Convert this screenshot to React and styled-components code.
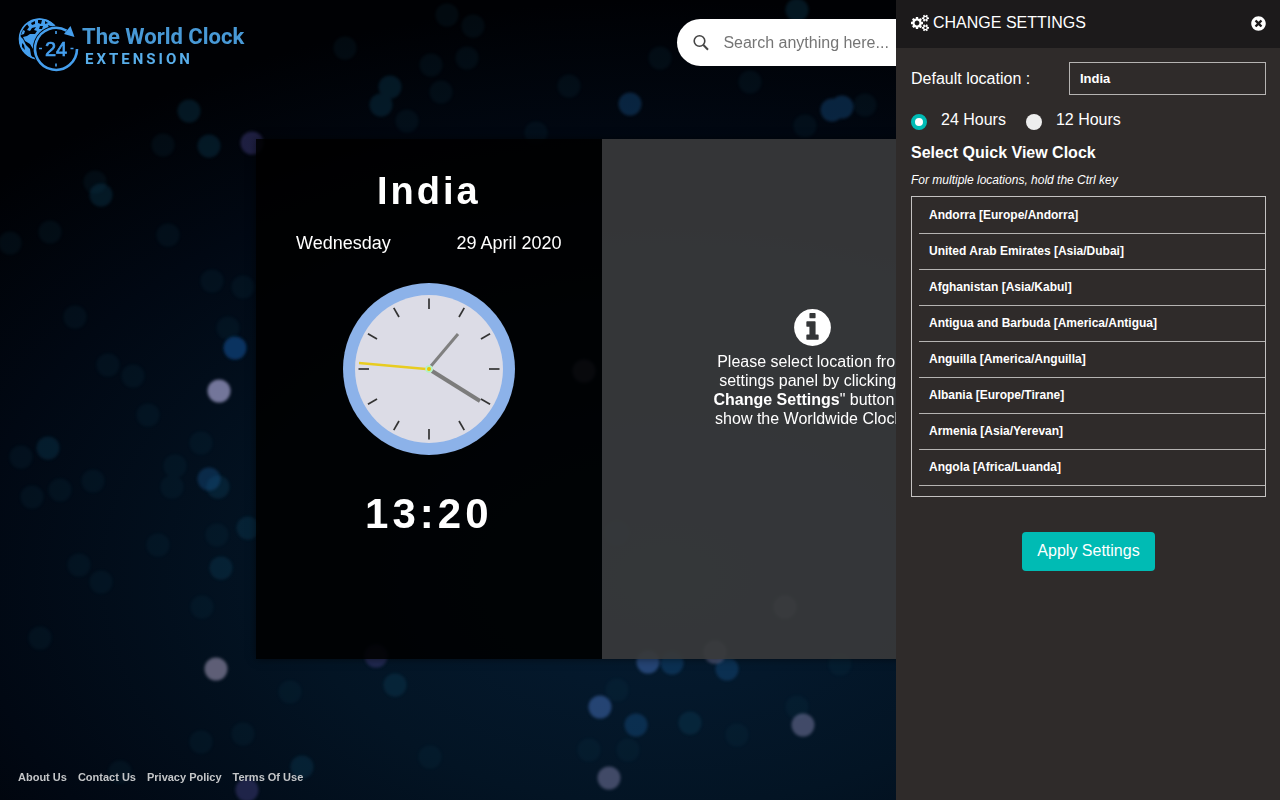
import { useState } from "react";
import styled, { createGlobalStyle } from "styled-components";
import { FaTimesCircle } from "react-icons/fa";

const GlobalStyle = createGlobalStyle`
  *, *::before, *::after {
    box-sizing: border-box;
  }
  body {
    margin: 0;
    background: #01050c;
    color: #fff;
    font-family: "Liberation Sans", Arial, sans-serif;
    font-size: 16px;
  }
  button, input, select {
    font-family: inherit;
  }
`;

const Page = styled.div`
  min-height: 100vh;
  display: flex;
  flex-direction: column;
  overflow: hidden;
`;

const Backdrop = styled.svg`
  position: fixed;
  inset: 0;
  width: 100%;
  height: 100%;
  z-index: -1;
`;

const Header = styled.header`
  display: flex;
  justify-content: space-between;
  align-items: flex-start;
  padding: 16px 17px 0;
`;

const Logo = styled.a`
  display: flex;
  gap: 3px;
  color: #4aa0e6;
  text-decoration: none;
`;

const LogoText = styled.span`
  display: flex;
  flex-direction: column;
  padding-top: 8px;
  font-family: "Liberation Sans Narrow", "Roboto", sans-serif;
  font-weight: bold;
`;

const LogoName = styled.span`
  font-size: 22px;
  line-height: 26px;
  color: #4899d6;
`;

const LogoSub = styled.span`
  padding-left: 3px;
  font-size: 15px;
  line-height: 18px;
  letter-spacing: 3px;
  color: #58aeea;
`;

const Search = styled.label`
  display: flex;
  align-items: center;
  gap: 14px;
  width: 47%;
  height: 47px;
  margin-top: 3px;
  padding: 0 16px;
  border-radius: 24px;
  background: #fff;

  svg {
    flex-shrink: 0;
  }
`;

const SearchInput = styled.input`
  flex: 1;
  padding: 0;
  border: 0;
  outline: 0;
  background: transparent;
  font-size: 16px;
  color: #333;
  &::placeholder {
    color: #757575;
  }
`;

const Main = styled.main`
  flex: 1;
  display: flex;
  align-items: flex-start;
  width: 60%;
  margin: 0 auto;
  padding: 66px 0 40px;
`;

const Cards = styled.div`
  flex: 1;
  display: flex;
  box-shadow: 0 0 8px rgba(0, 0, 0, 0.5);
`;

const ClockCard = styled.section`
  width: 45%;
  display: flex;
  flex-direction: column;
  align-items: center;
  padding: 32px 40px 121px;
  background: rgba(0, 0, 0, 0.88);
`;

const Country = styled.h1`
  margin: 0;
  font-size: 38px;
  line-height: 40px;
  letter-spacing: 3px;
`;

const DateRow = styled.div`
  display: flex;
  justify-content: space-between;
  width: 100%;
  margin: 22px 0 30px;
  font-size: 18px;
  line-height: 20px;
`;

const DigitalTime = styled.time`
  margin-top: 35px;
  font-size: 42px;
  line-height: 48px;
  font-weight: bold;
  letter-spacing: 4px;
`;

const InfoCard = styled.section`
  width: 55%;
  display: flex;
  flex-direction: column;
  align-items: center;
  padding-top: 167px;
  background: rgba(56, 57, 58, 0.93);
`;

const InfoText = styled.p`
  max-width: 204px;
  margin: 3px 0 0;
  line-height: 19px;
  text-align: center;
`;

const Footer = styled.footer`
  display: flex;
  gap: 11px;
  padding: 16px 18px;
`;

const FooterLink = styled.a`
  color: #c4c6c8;
  font-size: 11px;
  font-weight: bold;
  line-height: 14px;
  text-decoration: none;
`;

const Drawer = styled.aside`
  position: fixed;
  top: 0;
  right: 0;
  bottom: 0;
  width: 30%;
  background: #2f2b2a;
  overflow-y: auto;
`;

const DrawerHeader = styled.div`
  display: flex;
  align-items: center;
  gap: 4px;
  padding: 13px 14px 15px 15px;
  background: #1c1a1b;
`;

const DrawerTitle = styled.h2`
  flex: 1;
  margin: 0;
  font-size: 16px;
  font-weight: normal;
  line-height: 20px;
`;

const CloseButton = styled.button`
  display: flex;
  padding: 0;
  border: 0;
  background: transparent;
  color: #fff;
  cursor: pointer;
`;

const SettingsForm = styled.form`
  padding: 14px 14px 0 15px;
`;

const LocationRow = styled.div`
  display: flex;
  align-items: center;
  justify-content: space-between;
`;

const LocationSelect = styled.select`
  appearance: none;
  width: 197px;
  height: 33px;
  padding: 0 10px;
  border: 1px solid #b5b3b2;
  border-radius: 0;
  outline: 0;
  background: #2f2b2a;
  color: #fff;
  font-size: 13px;
  font-weight: bold;
`;

const RadioRow = styled.div`
  display: flex;
  gap: 20px;
  margin-top: 15px;
`;

const RadioLabel = styled.label`
  display: flex;
  align-items: center;
  gap: 14px;
  line-height: 20px;
`;

const Radio = styled.input`
  appearance: none;
  width: 16px;
  height: 16px;
  margin: 3px 0 0;
  border-radius: 50%;
  background: #eee;
  &:checked {
    border: 4px solid #00bbb4;
    background: #fff;
  }
`;

const ListLabel = styled.label`
  display: block;
  margin-top: 13px;
  font-weight: bold;
  line-height: 20px;
`;

const Hint = styled.p`
  margin: 9px 0 8px;
  font-size: 12px;
  line-height: 16px;
  font-style: italic;
`;

const ClockList = styled.select`
  display: block;
  width: 100%;
  height: 301px;
  padding: 1px 0 0 7px;
  border: 1px solid #c4c2c1;
  border-radius: 0;
  outline: 0;
  background: #2f2b2a;
  color: #fff;
  font-size: 12px;
  scrollbar-width: none;
`;

const ClockOption = styled.option`
  min-height: 36px;
  padding: 10px 10px 11px;
  border-bottom: 1px solid #b5b3b2;
  font-weight: bold;
  line-height: 14px;
`;

const ApplyButton = styled.button`
  display: block;
  margin: 35px auto 0;
  padding: 0 15px 2px;
  height: 39px;
  border: 0;
  border-radius: 4px;
  background: #00bbb4;
  color: #fff;
  font-size: 16px;
  cursor: pointer;
`;

const locations = [
  "Andorra [Europe/Andorra]",
  "United Arab Emirates [Asia/Dubai]",
  "Afghanistan [Asia/Kabul]",
  "Antigua and Barbuda [America/Antigua]",
  "Anguilla [America/Anguilla]",
  "Albania [Europe/Tirane]",
  "Armenia [Asia/Yerevan]",
  "Angola [Africa/Luanda]",
  "Antarctica [Antarctica/Casey]",
];

// [x, y] of the light spots, grouped by brightness
const spots = [
  {
    fill: "#0d3a50",
    opacity: 0.17,
    points: [
      [345, 48], [431, 65], [467, 58], [441, 92], [447, 15], [473, 26], [569, 86],
      [407, 121], [536, 133], [163, 145], [95, 182], [168, 235], [50, 232], [10, 243],
      [75, 317], [108, 365], [133, 376], [212, 281], [228, 328], [243, 287], [148, 415],
      [21, 457], [60, 490], [32, 497], [93, 481], [175, 466], [172, 487], [201, 443],
      [217, 535], [158, 545], [79, 565], [101, 582], [202, 607], [40, 638], [201, 742],
      [243, 734], [290, 692], [120, 772], [430, 757], [589, 750], [628, 750], [737, 735],
      [797, 707], [617, 690], [660, 58], [750, 82], [840, 664], [865, 105], [805, 126],
    ],
  },
  {
    fill: "#0f4460",
    opacity: 0.32,
    points: [
      [189, 111], [209, 146], [390, 87], [101, 195], [48, 448], [221, 568], [302, 767],
      [690, 723], [797, 10], [248, 528], [218, 487], [395, 685], [381, 105], [617, 533],
    ],
  },
  {
    fill: "#14528a",
    opacity: 0.4,
    points: [
      [209, 479], [630, 104], [832, 110], [842, 107], [636, 725], [672, 663], [727, 669],
    ],
  },
  { fill: "#0f3f78", opacity: 0.75, points: [[235, 348]] },
  { fill: "#3a62a4", opacity: 0.6, points: [[600, 707], [648, 662]] },
  { fill: "#3d3a78", opacity: 0.5, points: [[252, 143], [376, 656], [247, 790]] },
  { fill: "#7f7fa8", opacity: 0.5, points: [[803, 725], [609, 778], [715, 652], [785, 607], [584, 371]] },
  { fill: "#9090ba", opacity: 0.8, points: [[219, 391]] },
  { fill: "#75728c", opacity: 0.8, points: [[216, 669]] },
];

const NightSky = () => (
  <Backdrop viewBox="0 0 1280 800" preserveAspectRatio="xMidYMid slice" aria-hidden="true">
    <defs>
      <radialGradient id="sky" cx="0.52" cy="0.72" r="0.72">
        <stop offset="0" stopColor="#051c32" />
        <stop offset="0.4" stopColor="#031424" />
        <stop offset="0.75" stopColor="#010813" />
        <stop offset="1" stopColor="#000104" />
      </radialGradient>
      <filter id="soft" x="-50%" y="-50%" width="200%" height="200%">
        <feGaussianBlur stdDeviation="1.8" />
      </filter>
    </defs>
    <rect width="1280" height="800" fill="url(#sky)" />
    {spots.map((group) => (
      <g key={group.fill} fill={group.fill} opacity={group.opacity} filter="url(#soft)">
        {group.points.map(([x, y]) => (
          <circle key={`${x}-${y}`} cx={x} cy={y} r="11.5" />
        ))}
      </g>
    ))}
  </Backdrop>
);

const GlobeClock = () => (
  <svg width="62" height="57" viewBox="0 0 62 57" aria-hidden="true">
    <defs>
      <mask id="behind">
        <rect width="62" height="57" fill="#fff" />
        <circle cx="39" cy="33" r="23.2" fill="#000" />
      </mask>
      <clipPath id="globe">
        <circle cx="22.5" cy="23" r="20.5" />
      </clipPath>
    </defs>
    <g mask="url(#behind)">
      <circle cx="22.5" cy="23" r="20" fill="none" stroke="#459fee" strokeWidth="1.6" />
      <g clipPath="url(#globe)" fill="#459fee">
        <path d="M10 8 L14 4 L20 2 L28 2 L35 5 L40 10 L36 11 L31 9 L32 12 L28 13 L27 17 L22 20 L20 24 L17 28 L16 33 L13 28 L8 25 L6 21 L10 20 L13 18 L18 18 L20 15 L17 14 L19 11 L15 12 L13 15 L10 14 L12 11 Z" />
        <path d="M3 20 L6 23 L9 29 L13 33 L14 39 L17 45 L11 42 L5 35 L2 27 Z" />
        <path d="M6 14 L8 15 L7 18 L4 19 Z" />
      </g>
      <path
        fill="#01040a"
        d="M14 7 L18 5 L18 8 L15 9 Z M21 4 L25 4 L24 8 L21 7 Z M28 5 L31 7 L28 8 Z M23 10 L26 10 L25 13 L22 13 Z M5 27 L7 29 L8 34 L5 31 Z"
      />
    </g>
    <path
      d="M49.500 14.700 A21 21 0 1 0 60 33"
      fill="none"
      stroke="#459fee"
      strokeWidth="2.600"
    />
    <path d="M53.500 10 L57.500 21 L47 18 Z" fill="#459fee" />
    <path
      d="M39 15 v3 M39 47.500 v3 M22 32.500 h3 M53.500 32.500 h3"
      stroke="#459fee"
      strokeWidth="1.600"
    />
    <text
      x="39"
      y="39.500"
      textAnchor="middle"
      fill="#459fee"
      stroke="#459fee"
      strokeWidth="0.700"
      fontFamily="Liberation Sans, Arial, sans-serif"
      fontSize="20"
    >
      24
    </text>
  </svg>
);

const GearsIcon = () => (
  <svg width="18" height="18" viewBox="0 0 1920 1792" fill="currentColor" aria-hidden="true">
    <path d="M896 896q0-106-75-181t-181-75-181 75-75 181 75 181 181 75 181-75 75-181zm768 512q0-52-38-90t-90-38-90 38-38 90q0 53 37.500 90.500t90.500 37.500 90.500-37.500 37.500-90.500zm0-1024q0-52-38-90t-90-38-90 38-38 90q0 53 37.500 90.500t90.500 37.500 90.500-37.500 37.500-90.500zm-384 421v185q0 10-7 19.500t-16 10.500l-155 24q-11 35-32 76 34 48 90 115 7 11 7 20 0 12-7 19-23 30-82.500 89.500t-78.500 59.500q-11 0-21-7l-115-90q-37 19-77 31-11 108-23 155-7 24-30 24h-186q-11 0-20-7.500t-10-17.500l-23-153q-34-10-75-31l-118 89q-7 7-20 7-11 0-21-8-144-133-144-160 0-9 7-19 10-14 41-53t47-61q-23-44-35-82l-152-24q-10-1-17-9.500t-7-19.500v-185q0-10 7-19.500t16-10.500l155-24q11-35 32-76-34-48-90-115-7-11-7-20 0-12 7-20 22-30 82-89t79-59q11 0 21 7l115 90q34-18 77-32 11-108 23-154 7-24 30-24h186q11 0 20 7.500t10 17.500l23 153q34 10 75 31l118-89q8-7 20-7 11 0 21 8 144 133 144 160 0 8-7 19-12 16-42 54t-45 60q23 48 34 82l152 23q10 2 17 10.500t7 19.500zm640 533v140q0 16-149 31-12 27-30 52 51 113 51 138 0 4-4 7-122 71-124 71-8 0-46-47t-52-68q-20 2-30 2t-30-2q-14 21-52 68t-46 47q-2 0-124-71-4-3-4-7 0-25 51-138-18-25-30-52-149-15-149-31v-140q0-16 149-31 13-29 30-52-51-113-51-138 0-4 4-7 4-2 35-20t59-34 30-16q8 0 46 46.500t52 67.500q20-2 30-2t30 2q51-71 92-112l6-2q4 0 124 70 4 3 4 7 0 25-51 138 17 23 30 52 149 15 149 31zm0-1024v140q0 16-149 31-12 27-30 52 51 113 51 138 0 4-4 7-122 71-124 71-8 0-46-47t-52-68q-20 2-30 2t-30-2q-14 21-52 68t-46 47q-2 0-124-71-4-3-4-7 0-25 51-138-18-25-30-52-149-15-149-31v-140q0-16 149-31 13-29 30-52-51-113-51-138 0-4 4-7 4-2 35-20t59-34 30-16q8 0 46 46.500t52 67.500q20-2 30-2t30 2q51-71 92-112l6-2q4 0 124 70 4 3 4 7 0 25-51 138 17 23 30 52 149 15 149 31z" />
  </svg>
);

const InfoIcon = () => (
  <svg width="43" height="43" viewBox="0 0 1792 1792" fill="currentColor" aria-hidden="true">
    <path d="M1152 1376v-160q0-14-9-23t-23-9h-96v-512q0-14-9-23t-23-9h-320q-14 0-23 9t-9 23v160q0 14 9 23t23 9h96v320h-96q-14 0-23 9t-9 23v160q0 14 9 23t23 9h448q14 0 23-9t9-23zm-128-896v-160q0-14-9-23t-23-9h-192q-14 0-23 9t-9 23v160q0 14 9 23t23 9h192q14 0 23-9t9-23zm640 416q0 209-103 385.500t-279.500 279.500-385.500 103-385.500-103-279.500-279.500-103-385.500 103-385.500 279.500-279.500 385.500-103 385.500 103 279.500 279.500 103 385.500z" />
  </svg>
);

const AnalogClock = () => (
  <svg width="172" height="172" viewBox="-86 -86 172 172" role="img" aria-label="13:20">
    <circle r="86" fill="#8cb2e9" />
    <circle r="74" fill="#dcdce6" />
    {Array.from({ length: 12 }, (_, i) => (
      <line
        key={i}
        y1="-70.500"
        y2="-60"
        stroke="#333"
        strokeWidth="1.700"
        transform={`rotate(${i * 30})`}
      />
    ))}
    <line x1="2" y1="-3" x2="29" y2="-35" stroke="#808080" strokeWidth="3" />
    <line x1="3" y1="2" x2="51" y2="32" stroke="#7c7c7c" strokeWidth="4" />
    <line x1="-3" y1="0" x2="-70" y2="-6" stroke="#e8cc20" strokeWidth="2.400" />
    <circle r="3.800" fill="#b4f2c4" />
    <circle r="2" fill="#e6c800" />
  </svg>
);

const SearchIcon = () => (
  <svg width="16" height="17" viewBox="0 0 16 17" fill="none" stroke="#444" aria-hidden="true">
    <circle cx="6.500" cy="7" r="5.300" strokeWidth="1.600" />
    <path d="M10.400 11 L15 15.700" strokeWidth="2" />
  </svg>
);

const SettingsDrawer = () => {
  const [hours, setHours] = useState("24");

  return (
    <Drawer>
      <DrawerHeader>
        <GearsIcon />
        <DrawerTitle>CHANGE SETTINGS</DrawerTitle>
        <CloseButton type="button" aria-label="Close">
          <FaTimesCircle size={15} />
        </CloseButton>
      </DrawerHeader>
      <SettingsForm onSubmit={(e) => e.preventDefault()}>
        <LocationRow>
          <label htmlFor="location">Default location :</label>
          <LocationSelect id="location" defaultValue="India">
            <option>India</option>
          </LocationSelect>
        </LocationRow>
        <RadioRow>
          {["24", "12"].map((value) => (
            <RadioLabel key={value}>
              <Radio
                type="radio"
                name="hours"
                value={value}
                checked={hours === value}
                onChange={() => setHours(value)}
              />
              {value} Hours
            </RadioLabel>
          ))}
        </RadioRow>
        <ListLabel htmlFor="clocks">Select Quick View Clock</ListLabel>
        <Hint>For multiple locations, hold the Ctrl key</Hint>
        <ClockList id="clocks" multiple>
          {locations.map((location) => (
            <ClockOption key={location}>{location}</ClockOption>
          ))}
        </ClockList>
        <ApplyButton type="submit">Apply Settings</ApplyButton>
      </SettingsForm>
    </Drawer>
  );
};

const App = () => (
  <>
    <GlobalStyle />
    <NightSky />
    <Page>
      <Header>
        <Logo href="#">
          <GlobeClock />
          <LogoText>
            <LogoName>The World Clock</LogoName>
            <LogoSub>EXTENSION</LogoSub>
          </LogoText>
        </Logo>
        <Search>
          <SearchIcon />
          <SearchInput type="text" placeholder="Search anything here..." aria-label="Search" />
        </Search>
      </Header>
      <Main>
        <Cards>
          <ClockCard>
            <Country>India</Country>
            <DateRow>
              <span>Wednesday</span>
              <span>29 April 2020</span>
            </DateRow>
            <AnalogClock />
            <DigitalTime>13:20</DigitalTime>
          </ClockCard>
          <InfoCard>
            <InfoIcon />
            <InfoText>
              Please select location from settings panel by clicking &quot;{" "}
              <b>Change Settings</b>&quot; button to show the Worldwide Clocks
            </InfoText>
          </InfoCard>
        </Cards>
      </Main>
      <Footer>
        <FooterLink href="#">About Us</FooterLink>
        <FooterLink href="#">Contact Us</FooterLink>
        <FooterLink href="#">Privacy Policy</FooterLink>
        <FooterLink href="#">Terms Of Use</FooterLink>
      </Footer>
    </Page>
    <SettingsDrawer />
  </>
);

export default App;
